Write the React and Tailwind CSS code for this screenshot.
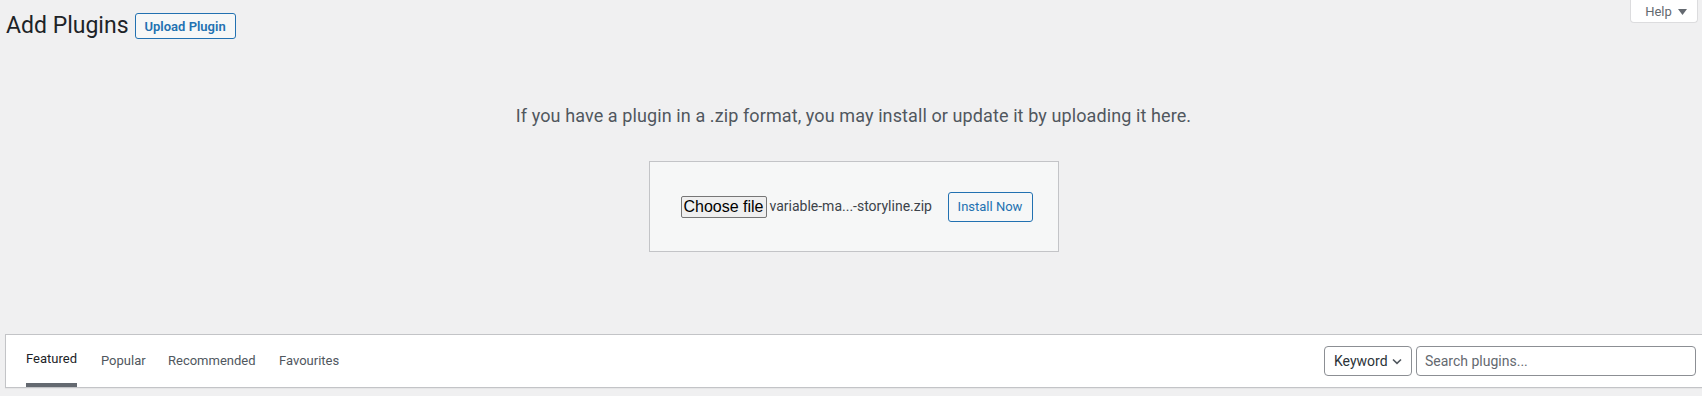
import React from "react";

export default function App() {
  return (
    <div className="w-[1702px] h-[396px] overflow-hidden bg-[#f0f0f1] font-['Roboto',sans-serif]">
      <div className="pl-[5px]">
        {/* header row */}
        <div className="flex items-start justify-between">
          <div className="flex items-center mt-[11px] pl-[1px]">
            <h1 className="text-[23px] leading-[30px] font-normal text-[#1d2327]">Add Plugins</h1>
            <button className="ml-[6px] h-[26px] px-[9px] border border-[#2271b1] rounded-[3px] bg-[#f6f7f7] text-[#2271b1] text-[13px] font-semibold leading-none">
              Upload Plugin
            </button>
          </div>
          <button className="mr-[4px] h-[23px] w-[68px] flex items-center justify-center gap-[6px] pl-[4px] bg-white border border-t-0 border-[#dcdcde] rounded-b-[4px] text-[#646970] text-[13px] leading-none">
            <span>Help</span>
            <svg width="9" height="6" viewBox="0 0 9 6" className="mt-[1px]">
              <path d="M0 0H9L4.5 6Z" fill="#646970" />
            </svg>
          </button>
        </div>

        {/* upload area */}
        <p className="mt-[61px] text-center text-[18px] leading-[27px] tracking-[0.1px] text-[#50575e]">
          If you have a plugin in a .zip format, you may install or update it by uploading it here.
        </p>
        <div className="mt-[32px] flex justify-center">
          <div className="w-[410px] h-[91px] border border-[#c3c4c7] bg-[#f6f7f7] flex items-center pl-[31px] pr-[25px]">
            <span className="h-[22px] w-[86px] flex items-center justify-center border border-[#767676] rounded-[2px] bg-[#efefef] text-black text-[16px] font-['Liberation_Sans',Arial,sans-serif] leading-none">
              Choose file
            </span>
            <span className="ml-[3px] text-[14px] text-[#3c434a] whitespace-nowrap">variable-ma...-storyline.zip</span>
            <button className="ml-auto h-[30px] w-[85px] border border-[#2271b1] rounded-[3px] bg-[#f6f7f7] text-[#2271b1] text-[13px] leading-none">
              Install Now
            </button>
          </div>
        </div>

        {/* filter bar */}
        <div className="mt-[82px] w-[1702px] h-[54px] border border-[#c3c4c7] bg-white flex items-stretch justify-between pl-[20px] pr-[10px] shadow-[0_1px_1px_rgba(0,0,0,0.04)]">
          <ul className="flex items-stretch gap-[24px] text-[13px]">
            <li className="flex">
              <a className="w-[51px] flex items-center justify-center border-b-4 border-[#646970] text-[#1d2327]">Featured</a>
            </li>
            <li className="flex">
              <a className="w-[43px] flex items-center text-[#50575e]">Popular</a>
            </li>
            <li className="flex">
              <a className="w-[87px] flex items-center text-[#50575e]">Recommended</a>
            </li>
            <li className="flex">
              <a className="flex items-center text-[#50575e]">Favourites</a>
            </li>
          </ul>
          <div className="flex items-center gap-[4px]">
            <div className="w-[88px] h-[30px] border border-[#8c8f94] rounded-[4px] bg-white flex items-center justify-between pl-[9px] pr-[9px] text-[14px] text-[#2c3338]">
              <span>Keyword</span>
              <svg width="10" height="7" viewBox="0 0 10 7">
                <path d="M1 1.5L5 5.3L9 1.5" fill="none" stroke="#50575e" strokeWidth="1.6" />
              </svg>
            </div>
            <div className="w-[280px] h-[30px] border border-[#8c8f94] rounded-[4px] bg-white flex items-center pl-[8px] text-[14px] text-[#646970]">
              Search plugins...
            </div>
          </div>
        </div>
      </div>
    </div>
  );
}
